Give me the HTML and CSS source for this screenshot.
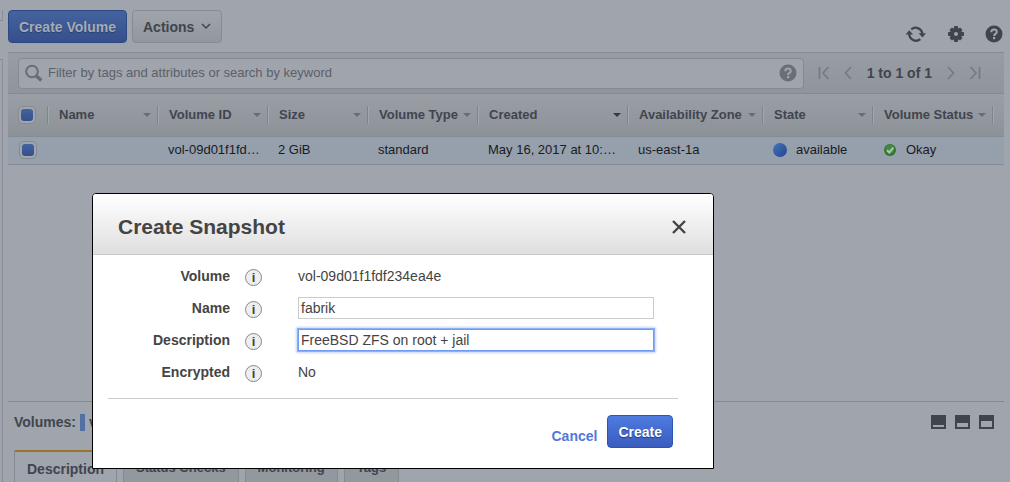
FILE: index.html
```html
<!DOCTYPE html>
<html lang="en">
<head>
<meta charset="utf-8">
<title>Volumes</title>
<link rel="stylesheet" href="styles.css">
</head>
<body>
<div class="app">
  <aside class="rail"><div class="rail-top"></div><div class="rail-rest"></div></aside>
  <main class="main">
    <div class="actions">
      <button class="btn btn-primary dim" type="button">Create Volume</button>
      <button class="btn btn-plain" type="button">Actions
        <svg width="10" height="7" viewBox="0 0 10 7"><path d="M1 1l4 4 4-4" fill="none" stroke="#40454e" stroke-width="1.5"/></svg>
      </button>
      <div class="tools">
        <button class="icon-btn" type="button" aria-label="Refresh">
          <svg width="22" height="18" viewBox="0 0 22 18"><g fill="none" stroke="#40444d" stroke-width="2.3"><path d="M6.3 4.3a6.7 6.7 0 0 1 11 5"/><path d="M4.3 8.8a6.7 6.7 0 0 0 11 5.3"/></g><path d="M13.6 8.3h7.4l-3.6 4.3zM.6 9.5h7.4L4.3 5.2z" fill="#40444d"/></svg>
        </button>
        <button class="icon-btn" type="button" aria-label="Settings">
          <svg width="18" height="18" viewBox="0 0 18 18"><g fill="#40444d"><path d="M7.3 1h3.4l.5 3H6.8zM7.3 17h3.4l.5-3H6.8zM1 7.3v3.4l3 .5V6.8zM17 7.3v3.4l-3 .5V6.8z"/><path d="M7.3 1.5h3.4l.5 3H6.8zM7.3 16.5h3.4l.5-3H6.8zM1.5 7.3v3.4l3 .5V6.8zM16.5 7.3v3.4l-3 .5V6.8z" transform="rotate(45 9 9)"/></g><circle cx="9" cy="9" r="4" fill="none" stroke="#40444d" stroke-width="4"/></svg>
        </button>
        <button class="icon-btn" type="button" aria-label="Help">
          <svg width="18" height="18" viewBox="0 0 18 18"><circle cx="9" cy="9" r="8.5" fill="#40444d"/><path d="M6.3 7.2C6.3 5.4 7.4 4.6 9 4.6s2.8.9 2.8 2.4c0 1.900-2.700 1.900-2.700 3.900" fill="none" stroke="#a0a4ac" stroke-width="2"/><path d="M8 12h2.2v2.2H8z" fill="#a0a4ac"/></svg>
        </button>
      </div>
    </div>

    <div class="filterbar">
      <div class="search">
        <svg width="18" height="18" viewBox="0 0 18 18"><circle cx="7" cy="7.5" r="5.8" fill="none" stroke="#686c74" stroke-width="2"/><path d="M11.3 12l5 4.5" stroke="#686c74" stroke-width="3.6"/></svg>
        <input class="search-input" type="text" aria-label="Filter volumes" placeholder="Filter by tags and attributes or search by keyword">
        <svg width="18" height="18" viewBox="0 0 18 18"><circle cx="9" cy="9" r="8.5" fill="#6a6e76"/><path d="M6.3 7.2C6.3 5.4 7.4 4.6 9 4.6s2.8.9 2.8 2.4c0 1.900-2.700 1.900-2.700 3.900" fill="none" stroke="#a0a4ac" stroke-width="2"/><path d="M8 12h2.2v2.2H8z" fill="#a0a4ac"/></svg>
      </div>
      <nav class="pager" aria-label="Pages">
        <button class="icon-btn" type="button" aria-label="First"><svg width="12" height="14" viewBox="0 0 12 14"><path d="M1.500 1v12M10.500 1L5 7l5.500 6" fill="none" stroke="#767a82" stroke-width="1.700"/></svg></button>
        <button class="icon-btn" type="button" aria-label="Previous"><svg width="8" height="14" viewBox="0 0 8 14"><path d="M7 1L1.500 7 7 13" fill="none" stroke="#767a82" stroke-width="1.700"/></svg></button>
        <span class="count">1 to 1 of 1</span>
        <button class="icon-btn" type="button" aria-label="Next"><svg width="8" height="14" viewBox="0 0 8 14"><path d="M1 1l5.500 6L1 13" fill="none" stroke="#767a82" stroke-width="1.700"/></svg></button>
        <button class="icon-btn" type="button" aria-label="Last"><svg width="12" height="14" viewBox="0 0 12 14"><path d="M10.500 1v12M1.500 1L7 7l-5.500 6" fill="none" stroke="#767a82" stroke-width="1.700"/></svg></button>
      </nav>
    </div>

    <table class="grid">
      <colgroup><col class="w40"><col class="w110"><col class="w110"><col class="w100"><col class="w110"><col class="w150"><col class="w135"><col class="w110"><col class="w120"><col></colgroup>
      <thead>
        <tr>
          <th><div class="cell first"><input class="tick" type="checkbox" aria-label="Select all" checked></div></th>
          <th><div class="cell">Name<i class="caret"></i></div></th>
          <th><div class="cell">Volume ID<i class="caret"></i></div></th>
          <th><div class="cell">Size<i class="caret"></i></div></th>
          <th><div class="cell">Volume Type<i class="caret"></i></div></th>
          <th><div class="cell">Created<i class="caret sorted"></i></div></th>
          <th><div class="cell">Availability Zone<i class="caret"></i></div></th>
          <th><div class="cell">State<i class="caret"></i></div></th>
          <th><div class="cell">Volume Status<i class="caret"></i></div></th>
          <th></th>
        </tr>
      </thead>
      <tbody>
        <tr>
          <td><input class="tick" type="checkbox" aria-label="Select volume" checked></td>
          <td></td>
          <td>vol-09d01f1fd…</td>
          <td>2 GiB</td>
          <td>standard</td>
          <td>May 16, 2017 at 10:…</td>
          <td>us-east-1a</td>
          <td><div class="status"><span class="ball"></span>available</div></td>
          <td><div class="status"><svg width="14" height="14" viewBox="0 0 14 14"><circle cx="7" cy="7" r="6" fill="#31762f"/><circle cx="7" cy="6" r="4.500" fill="#438a3d"/><path d="M4 7.300l2.300 2.200L10.300 4.700" fill="none" stroke="#b5bfc0" stroke-width="2"/></svg>Okay</div></td>
          <td></td>
        </tr>
      </tbody>
    </table>

    <section class="details">
      <div class="details-head">
        <span>Volumes:</span><span class="chip"></span><span>vol-09d01f1fdf234ea4e</span>
        <div class="sizes">
          <button class="pane low" type="button" aria-label="Small pane"></button>
          <button class="pane mid" type="button" aria-label="Medium pane"></button>
          <button class="pane high" type="button" aria-label="Large pane"></button>
        </div>
      </div>
      <div class="tabs">
        <button class="tab active" type="button">Description</button>
        <button class="tab" type="button">Status Checks</button>
        <button class="tab" type="button">Monitoring</button>
        <button class="tab" type="button">Tags</button>
      </div>
    </section>
  </main>
</div>

<dialog class="dialog" open aria-labelledby="title">
  <header class="dialog-head">
    <h1 id="title">Create Snapshot</h1>
    <button class="icon-btn" type="button" aria-label="Close"><svg width="14" height="14" viewBox="0 0 14 14"><path d="M1 1l12 12M13 1L1 13" stroke="#444" stroke-width="2.400"/></svg></button>
  </header>
  <form class="form">
    <span class="label">Volume</span><span class="info"></span><span class="value">vol-09d01f1fdf234ea4e</span>
    <label class="label" for="name">Name</label><span class="info"></span><input class="field" id="name" type="text" value="fabrik">
    <label class="label" for="desc">Description</label><span class="info"></span><input class="field focused" id="desc" type="text" value="FreeBSD ZFS on root + jail">
    <span class="label">Encrypted</span><span class="info"></span><span class="value">No</span>
  </form>
  <footer class="dialog-foot">
    <a class="cancel" href="#">Cancel</a>
    <button class="btn btn-primary" type="button">Create</button>
  </footer>
</dialog>
</body>
</html>
```
FILE: styles.css
```css
* { box-sizing: border-box; }

body {
  margin: 0;
  background: #a0a4ac;
  color: #40454e;
  font: 14px/20px "Helvetica Neue", "Liberation Sans", Arial, sans-serif;
  overflow: hidden;
}
button, input { font: inherit; color: inherit; }
svg { display: block; flex: none; }

.app { display: flex; height: 100vh; }
.rail { display: flex; flex-direction: column; gap: 38px; width: 8px; padding-top: 10px; }
.rail-top { width: 3px; height: 11px; border: solid #8a8e96; border-width: 0 1px 1px 0; }
.rail-rest { flex: 1; width: 3px; border: solid #8a8e96; border-width: 1px 1px 0 0; }
.main { display: flex; flex: 1; flex-direction: column; min-width: 0; padding-right: 6px; }

.actions { display: flex; gap: 5px; padding: 10px 0 9px; }
.btn {
  display: flex;
  align-items: center;
  gap: 7px;
  height: 33px;
  padding: 0 10px;
  border: 1px solid;
  border-radius: 4px;
  font-weight: bold;
}
.btn-primary {
  border-color: #2f55b3;
  background: linear-gradient(#4f7bdf, #3a5cbf);
  color: #fff;
  text-shadow: 0 1px 1px #1d3a85;
}
.btn-primary.dim {
  border-color: #2c4983;
  background: linear-gradient(#43639f, #364f8c);
  color: #a6abb5;
  text-shadow: 0 1px 1px #2a3f70;
}
.btn-plain { border-color: #868a92; background: linear-gradient(#a0a4ac, #92969d); }
.tools { display: flex; align-items: center; gap: 20px; margin: 15px 1px 0 auto; }
.icon-btn { display: block; padding: 0; border: 0; background: none; }

.filterbar {
  display: flex;
  align-items: center;
  gap: 14px;
  height: 42px;
  padding: 0 23px 0 10px;
  border-top: 1px solid #858990;
  border-bottom: 1px solid #858990;
  background: linear-gradient(#989ca3, #90949b);
}
.search {
  display: flex;
  flex: 1;
  align-items: center;
  gap: 5px;
  height: 31px;
  padding: 0 6px;
  border: 1px solid #858990;
  border-radius: 4px;
  background: #a0a4ac;
}
.search-input { flex: 1; min-width: 0; padding: 0; border: 0; outline: 0; background: none; font-size: 13px; }
.search-input::placeholder { color: #5c6068; opacity: 1; }
.pager { display: flex; align-items: center; gap: 14px; }
.count { margin: 0 1px; color: #40454e; font-weight: bold; }

.grid { width: 100%; border-collapse: collapse; table-layout: fixed; font-size: 13px; }
.w40 { width: 40px; }
.w100 { width: 100px; }
.w110 { width: 110px; }
.w120 { width: 120px; }
.w135 { width: 135px; }
.w150 { width: 150px; }
.grid th { height: 42px; padding: 0; text-align: left; }
.grid thead { background: linear-gradient(#9a9ea5, #8d9198); }
.cell {
  display: flex;
  align-items: center;
  justify-content: space-between;
  height: 18px;
  padding: 0 6px 0 11px;
  border-right: 1px solid #7f838a;
  box-shadow: 1px 0 #a2a6ad;
}
.cell.first { padding-left: 10px; }
.caret { border: 4px solid transparent; border-top-color: #686c74; border-bottom: 0; }
.sorted { border-top-color: #343942; }
.grid td {
  height: 28px;
  padding: 0 6px 0 10px;
  border: solid #858b95;
  border-width: 1px 0;
  background: #96a0ad;
  color: #181b22;
  white-space: nowrap;
}
.tick {
  display: block;
  width: 18px;
  height: 18px;
  margin: 0;
  padding: 2px;
  border: 1px solid #858990;
  border-radius: 5px;
  appearance: none;
  background: #a0a4ac;
}
.tick::before {
  content: "";
  display: block;
  height: 12px;
  border-radius: 3px;
  background: linear-gradient(#43639f, #364f8c);
}
.grid td .tick { margin-left: 1px; }
.status { display: flex; align-items: center; gap: 9px; }
.ball { width: 14px; height: 14px; border-radius: 50%; background: linear-gradient(135deg, #4179b8, #283f91); }

.details { height: 81px; margin-top: auto; padding: 10px 6px 0; border-top: 1px solid #858990; overflow: hidden; }
.details-head { display: flex; align-items: center; gap: 4px; font-weight: bold; }
.chip { width: 5px; height: 17px; background: #5370a5; }
.sizes { display: flex; gap: 9px; margin: 0 4px 0 auto; }
.pane { width: 15px; height: 14px; padding: 0; border: 2px solid #40444d; background: #a0a4ac; }
.low { border-top-width: 10px; }
.mid { border-top-width: 8px; }
.high { border-top-width: 6px; }
.tabs { display: flex; gap: 6px; margin-top: 18px; }
.tab {
  height: 40px;
  padding: 0 12px 4px;
  border: 1px solid #858990;
  background: #93979e;
  font-size: 13px;
  font-weight: bold;
}
.tab.active { border-top: 2px solid #9b7430; border-radius: 2px 2px 0 0; background: #a0a4ac; font-size: 14px; }

.dialog {
  position: absolute;
  top: 193px;
  left: 92px;
  width: 622px;
  margin: 0;
  padding: 0;
  border: 1px solid #000;
  border-radius: 4px 4px 0 0;
  background: #fff;
  color: #444;
}
.dialog-head {
  display: flex;
  align-items: center;
  justify-content: space-between;
  height: 61px;
  padding: 6px 27px 0 25px;
  border-bottom: 1px solid #c8c8c8;
  border-radius: 3px 3px 0 0;
  background: linear-gradient(#fff, #dfdfdf);
}
.dialog-head h1 { margin: 0; font-size: 21px; line-height: 28px; }
.form {
  display: grid;
  grid-template-columns: 122px 17px 1fr;
  grid-auto-rows: 22px;
  gap: 10px 15px;
  align-items: center;
  margin: 0 35px 0 15px;
  padding: 10px 24px 15px 0;
  border-bottom: 1px solid #ccc;
}
.label { font-weight: bold; text-align: right; }
.info {
  width: 17px;
  height: 17px;
  margin-top: 2px;
  border: 1px solid #888;
  border-radius: 50%;
  background: #eee;
  font: bold 13px/15px "Liberation Sans", sans-serif;
  text-align: center;
}
.info::before { content: "i"; }
.value, .field { margin-left: 21px; font-size: 14px; }
.field { height: 22px; min-width: 0; padding: 0 2px; border: 1px solid #ccc; outline: 0; }
.focused { border-color: #6f9bf0; box-shadow: 0 0 0 1px #8db0f5, 0 0 2px 2px #c5d7fa; }
.dialog-foot { display: flex; justify-content: flex-end; gap: 10px; padding: 16px 40px 20px 0; }
.cancel { margin-top: 11px; color: #5078dc; font-weight: bold; text-decoration: none; }
```
